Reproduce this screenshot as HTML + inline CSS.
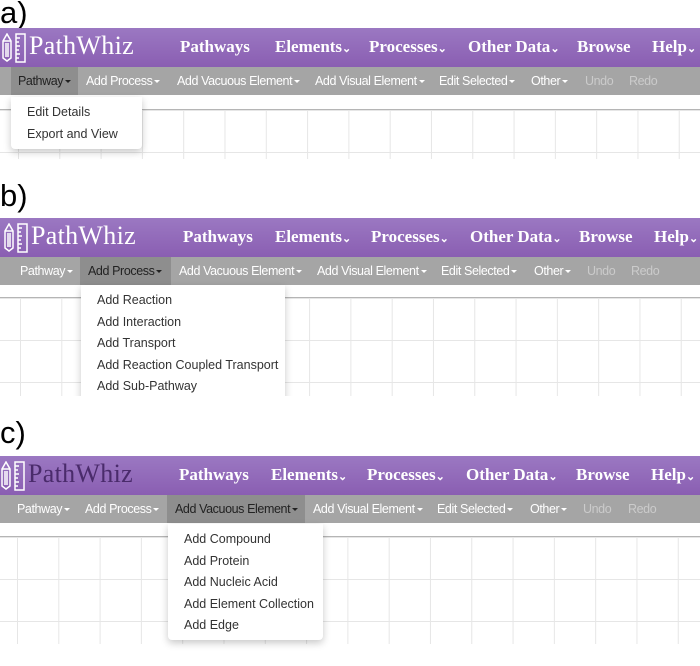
<!DOCTYPE html>
<html><head><style>
*{margin:0;padding:0;box-sizing:border-box}
body{width:700px;height:666px;background:#fff;position:relative;overflow:hidden;font-family:"Liberation Sans",Helvetica,sans-serif}
.lbl{position:absolute;left:0;font-size:31px;color:#000;line-height:1}
.panel{position:absolute;left:0;width:700px}
.purple{position:absolute;left:0;top:0;width:700px;height:39px;background:linear-gradient(#9b78c2,#8a5eb2)}
.gray{position:absolute;left:0;top:39px;width:700px;height:28px;background:#a5a5a5}
.grid{position:absolute;left:0;width:700px;border-top:1px solid #b5b5b5;
background-image:linear-gradient(90deg,#e6e6e6 1px,transparent 1px),linear-gradient(#e6e6e6 1px,transparent 1px);background-size:41.3px 42px}
.logo{position:absolute;left:29px;top:3px;font-family:"Liberation Serif",serif;font-size:26px;color:#fff;letter-spacing:0.3px}
.nav{position:absolute;top:9px;font-family:"Liberation Serif",serif;font-weight:bold;font-size:17px;color:#fff;white-space:nowrap}
.nav small{font-size:11px}
.it{position:absolute;top:0;height:28px;line-height:28px;font-size:12.5px;color:#fff;white-space:nowrap;letter-spacing:-0.4px}
.it.dis{color:#cbcbcb}
.it.act{background:#8e8e8e;color:#222}
.car{display:inline-block;width:0;height:0;border-left:3px solid transparent;border-right:3px solid transparent;border-top:3px solid currentColor;vertical-align:middle;margin-left:2px}
.dd{position:absolute;background:#fff;border-radius:0 0 4px 4px;box-shadow:0 3px 8px rgba(0,0,0,.22);font-size:12.5px;color:#333}
.dd div{height:21.5px;line-height:21.5px;padding-left:16px;white-space:nowrap}
</style></head><body>

<div class="lbl" style="top:-3px">a)</div>
<div class="panel" style="top:28px;height:131px">
  <div class="purple">
    <svg style="position:absolute;left:1px;top:5px" width="26" height="30" viewBox="0 0 26 30" fill="none" stroke="#fff" stroke-width="1.5"><path d="M2 8 L6 1 L10 8 V25 L6 28 L2 25 Z M2 8 H10 M5 10 V24 M7 10 V24"/><rect x="15" y="1" width="9" height="28"/><path d="M15 5h4M15 9h3M15 13h4M15 17h3M15 21h4M15 25h3"/></svg>
    <div class="logo">PathWhiz</div>
    <div class="nav" style="left:180px">Pathways</div>
    <div class="nav" style="left:275px">Elements<small>⌄</small></div>
    <div class="nav" style="left:369px">Processes<small>⌄</small></div>
    <div class="nav" style="left:468px">Other Data<small>⌄</small></div>
    <div class="nav" style="left:577px">Browse</div>
    <div class="nav" style="left:652px">Help<small>⌄</small></div>
  </div>
  <div class="gray">
    <div class="it act" style="left:11px;padding:0 7px;width:67px">Pathway<span class="car"></span></div>
    <div class="it" style="left:86px">Add Process<span class="car"></span></div>
    <div class="it" style="left:177px">Add Vacuous Element<span class="car"></span></div>
    <div class="it" style="left:315px">Add Visual Element<span class="car"></span></div>
    <div class="it" style="left:439px">Edit Selected<span class="car"></span></div>
    <div class="it" style="left:531px">Other<span class="car"></span></div>
    <div class="it dis" style="left:585px">Undo</div>
    <div class="it dis" style="left:629px">Redo</div>
  </div>
  <div class="grid" style="top:81px;height:50px;background-position:18px 0,0 0"></div>
  <div class="dd" style="left:11px;top:69px;width:131px;padding-top:5px;height:52px"><div>Edit Details</div><div>Export and View</div></div>
</div>

<div class="lbl" style="top:180px">b)</div>
<div class="panel" style="top:218px;height:178px;overflow:hidden">
  <div class="purple">
    <svg style="position:absolute;left:3px;top:5px" width="26" height="30" viewBox="0 0 26 30" fill="none" stroke="#fff" stroke-width="1.5"><path d="M2 8 L6 1 L10 8 V25 L6 28 L2 25 Z M2 8 H10 M5 10 V24 M7 10 V24"/><rect x="15" y="1" width="9" height="28"/><path d="M15 5h4M15 9h3M15 13h4M15 17h3M15 21h4M15 25h3"/></svg>
    <div class="logo" style="left:31px">PathWhiz</div>
    <div class="nav" style="left:183px">Pathways</div>
    <div class="nav" style="left:275px">Elements<small>⌄</small></div>
    <div class="nav" style="left:371px">Processes<small>⌄</small></div>
    <div class="nav" style="left:470px">Other Data<small>⌄</small></div>
    <div class="nav" style="left:579px">Browse</div>
    <div class="nav" style="left:654px">Help<small>⌄</small></div>
  </div>
  <div class="gray">
    <div class="it" style="left:20px">Pathway<span class="car"></span></div>
    <div class="it act" style="left:80px;padding:0 8px;width:91px">Add Process<span class="car"></span></div>
    <div class="it" style="left:179px">Add Vacuous Element<span class="car"></span></div>
    <div class="it" style="left:317px">Add Visual Element<span class="car"></span></div>
    <div class="it" style="left:441px">Edit Selected<span class="car"></span></div>
    <div class="it" style="left:534px">Other<span class="car"></span></div>
    <div class="it dis" style="left:587px">Undo</div>
    <div class="it dis" style="left:631px">Redo</div>
  </div>
  <div class="grid" style="top:79px;height:99px;background-position:20px 0,0 0"></div>
  <div class="dd" style="left:81px;top:67px;width:204px;padding-top:5px;height:120px"><div>Add Reaction</div><div>Add Interaction</div><div>Add Transport</div><div>Add Reaction Coupled Transport</div><div>Add Sub-Pathway</div></div>
</div>

<div class="lbl" style="top:417px">c)</div>
<div class="panel" style="top:456px;height:188px">
  <div class="purple">
    <svg style="position:absolute;left:0px;top:5px" width="26" height="30" viewBox="0 0 26 30" fill="none" stroke="#fff" stroke-width="1.5"><path d="M2 8 L6 1 L10 8 V25 L6 28 L2 25 Z M2 8 H10 M5 10 V24 M7 10 V24"/><rect x="15" y="1" width="9" height="28"/><path d="M15 5h4M15 9h3M15 13h4M15 17h3M15 21h4M15 25h3"/></svg>
    <div class="logo" style="left:28px;color:#4a2b6b">PathWhiz</div>
    <div class="nav" style="left:179px">Pathways</div>
    <div class="nav" style="left:271px">Elements<small>⌄</small></div>
    <div class="nav" style="left:367px">Processes<small>⌄</small></div>
    <div class="nav" style="left:466px">Other Data<small>⌄</small></div>
    <div class="nav" style="left:576px">Browse</div>
    <div class="nav" style="left:651px">Help<small>⌄</small></div>
  </div>
  <div class="gray">
    <div class="it" style="left:17px">Pathway<span class="car"></span></div>
    <div class="it" style="left:85px">Add Process<span class="car"></span></div>
    <div class="it act" style="left:167px;padding:0 8px;width:138px">Add Vacuous Element<span class="car"></span></div>
    <div class="it" style="left:313px">Add Visual Element<span class="car"></span></div>
    <div class="it" style="left:437px">Edit Selected<span class="car"></span></div>
    <div class="it" style="left:530px">Other<span class="car"></span></div>
    <div class="it dis" style="left:583px">Undo</div>
    <div class="it dis" style="left:628px">Redo</div>
  </div>
  <div class="grid" style="top:80px;height:108px;background-position:17px 0,0 0"></div>
  <div class="dd" style="left:168px;top:68px;width:155px;padding-top:5px;height:116px"><div>Add Compound</div><div>Add Protein</div><div>Add Nucleic Acid</div><div>Add Element Collection</div><div>Add Edge</div></div>
</div>
</body></html>
